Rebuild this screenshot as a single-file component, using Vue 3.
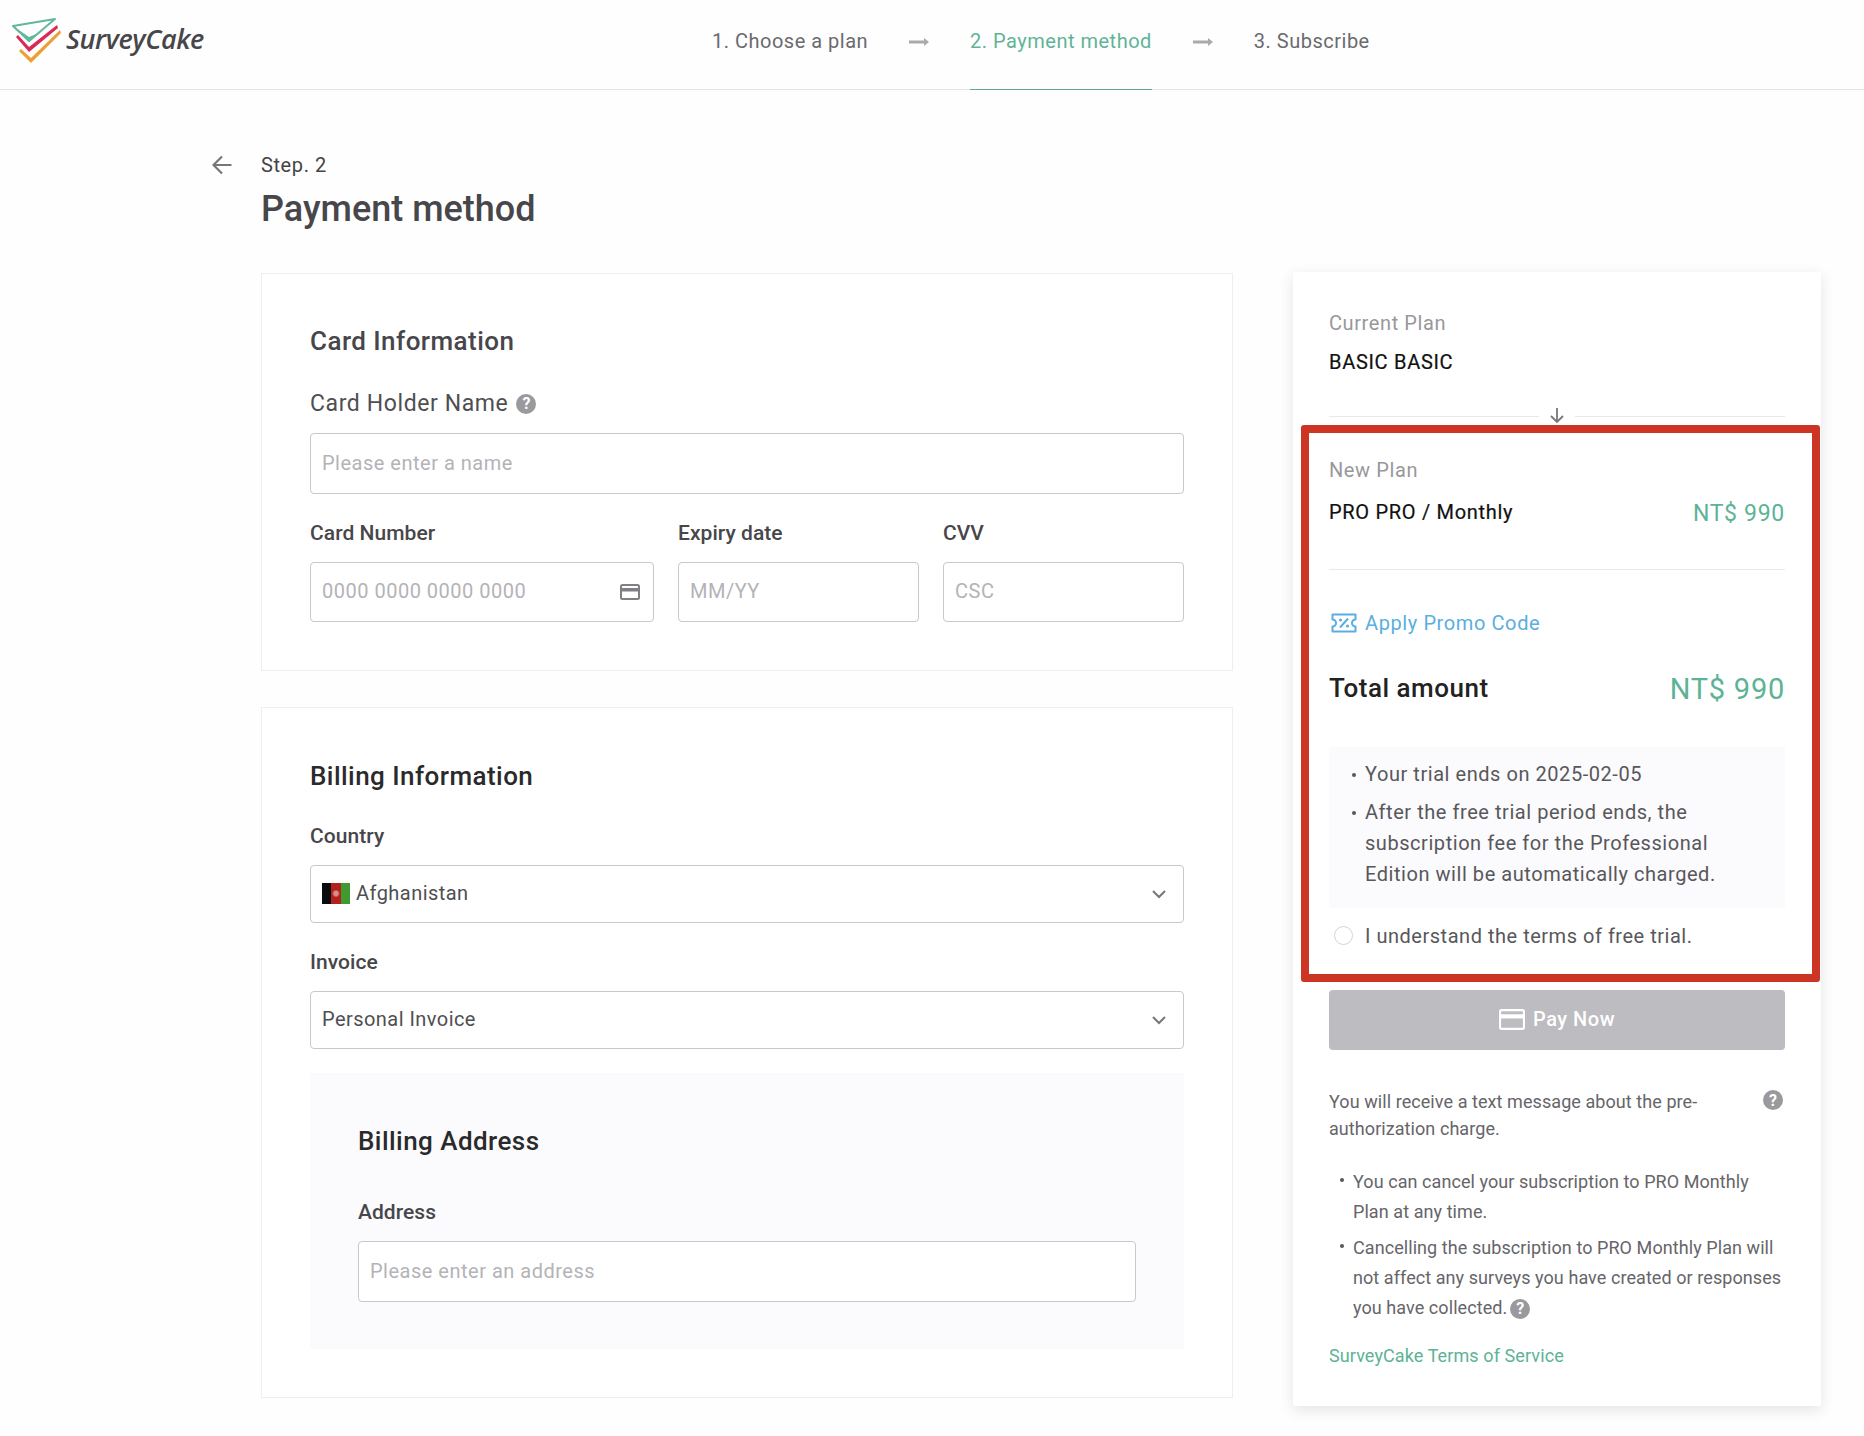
<template>
  <div class="page">
    <header class="topbar">
      <div class="brand">
        <svg class="brand-mark" viewBox="0 0 52 46" width="52" height="46">
          <polygon points="8,34 10,32 20,41 49,13 50,16 20,46" fill="#ee9f33" />
          <polygon points="5,20 7,18 18,30 46,8 47,11 18,35" fill="#d92b57" />
          <path d="M2 9 L44 2 L18 24 Z" fill="#fff" stroke="#62b89c" stroke-width="2" stroke-linejoin="round" />
          <path d="M2 9 L18 25 L30 15 L18 20 Z" fill="#62b89c" />
        </svg>
        <span class="brand-name">SurveyCake</span>
      </div>
      <nav class="steps">
        <template v-for="(step, index) of steps" :key="step.label">
          <svg v-if="index > 0" class="step-arrow" viewBox="0 0 20 10" width="20" height="10">
            <path d="M0 3.5h15V1l5 4l-5 4V6.5H0z" fill="#aaa9ad" />
          </svg>
          <div class="step" :class="{ active: step.active }">{{ step.label }}</div>
        </template>
      </nav>
    </header>

    <div class="head">
      <svg class="back" viewBox="0 0 20 20" width="20" height="20">
        <path d="M19.5 10H1.5M10 1.5L1.5 10L10 18.5" fill="none" stroke="#77767a" stroke-width="2.2" />
      </svg>
      <div>
        <div class="head-step">Step. 2</div>
        <h1 class="head-title">Payment method</h1>
      </div>
    </div>

    <main class="columns">
      <div class="forms">
        <section class="card">
          <h2 class="card-title muted-title">Card Information</h2>
          <div class="holder-label">Card Holder Name <span class="help">?</span></div>
          <input class="field tall" placeholder="Please enter a name" />
          <div class="card-row">
            <div class="col-number">
              <label class="label">Card Number</label>
              <div class="with-icon">
                <input class="field" placeholder="0000 0000 0000 0000" />
                <svg class="field-icon" viewBox="0 0 20 16" width="20" height="16">
                  <rect x="1" y="1" width="18" height="14" rx="1.5" fill="none" stroke="#807f83" stroke-width="2" />
                  <rect x="1" y="4" width="18" height="3.5" fill="#807f83" />
                </svg>
              </div>
            </div>
            <div class="col-short">
              <label class="label">Expiry date</label>
              <input class="field" placeholder="MM/YY" />
            </div>
            <div class="col-short">
              <label class="label">CVV</label>
              <input class="field" placeholder="CSC" />
            </div>
          </div>
        </section>

        <section class="card billing">
          <h2 class="card-title">Billing Information</h2>
          <label class="label country-label">Country</label>
          <div class="select">
            <span class="flag"><i class="black"></i><i class="red"></i><i class="green"></i></span>
            <span>Afghanistan</span>
            <svg class="chevron" viewBox="0 0 14 9" width="14" height="9">
              <path d="M1 1l6 6l6-6" fill="none" stroke="#77767a" stroke-width="2" />
            </svg>
          </div>
          <label class="label invoice-label">Invoice</label>
          <div class="select">
            <span>Personal Invoice</span>
            <svg class="chevron" viewBox="0 0 14 9" width="14" height="9">
              <path d="M1 1l6 6l6-6" fill="none" stroke="#77767a" stroke-width="2" />
            </svg>
          </div>
          <div class="address">
            <h2 class="card-title">Billing Address</h2>
            <label class="label address-label">Address</label>
            <input class="field tall" placeholder="Please enter an address" />
          </div>
        </section>
      </div>

      <aside class="summary">
        <div class="plan-caption">Current Plan</div>
        <div class="plan-name current">BASIC BASIC</div>
        <div class="rule first-rule">
          <span class="rule-arrow">
            <svg viewBox="0 0 14 16" width="14" height="16">
              <path d="M7 0v14M1 8l6 6l6-6" fill="none" stroke="#77767a" stroke-width="1.8" />
            </svg>
          </span>
        </div>

        <div class="plan-caption new-caption">New Plan</div>
        <div class="plan-row">
          <span class="plan-name">PRO PRO / Monthly</span>
          <span class="price">NT$ 990</span>
        </div>
        <div class="rule second-rule"></div>

        <div class="promo">
          <svg viewBox="0 0 26 20" width="26" height="20">
            <path d="M1.5 1.5h23v5a3.5 3.5 0 0 0 0 7v5h-23v-5a3.5 3.5 0 0 0 0-7z" fill="none" stroke="#5aaee0" stroke-width="2" stroke-linejoin="round" />
            <path d="M9 14.5L17 5.5" stroke="#5aaee0" stroke-width="2" />
            <circle cx="9.5" cy="7" r="1.6" fill="#5aaee0" />
            <circle cx="16.5" cy="13" r="1.6" fill="#5aaee0" />
          </svg>
          <span>Apply Promo Code</span>
        </div>

        <div class="total">
          <span>Total amount</span>
          <span class="total-price">NT$ 990</span>
        </div>

        <ul class="notes">
          <li>Your trial ends on 2025-02-05</li>
          <li>After the free trial period ends, the subscription fee for the Professional Edition will be automatically charged.</li>
        </ul>

        <div class="agree">
          <span class="radio"></span>
          <span>I understand the terms of free trial.</span>
        </div>

        <button class="pay">
          <svg viewBox="0 0 25 20" width="26" height="21">
            <rect x="1" y="1" width="23" height="18" rx="1.5" fill="none" stroke="#fff" stroke-width="2" />
            <rect x="1" y="5" width="23" height="4" fill="#fff" />
          </svg>
          <span>Pay Now</span>
        </button>

        <div class="sms">
          <p>You will receive a text message about the pre-authorization charge.</p>
          <span class="help">?</span>
        </div>

        <ul class="terms">
          <li>You can cancel your subscription to PRO Monthly Plan at any time.</li>
          <li>Cancelling the subscription to PRO Monthly Plan will not affect any surveys you have created or responses you have collected.<span class="help inline">?</span></li>
        </ul>

        <div class="terms-link">SurveyCake Terms of Service</div>

        <div class="highlight"></div>
      </aside>
    </main>
  </div>
</template>

<script setup>
const steps = [
  { label: "1. Choose a plan", active: false },
  { label: "2. Payment method", active: true },
  { label: "3. Subscribe", active: false },
];
</script>

<style scoped>
.page {
  width: 1864px;
  height: 1436px;
  overflow: hidden;
  background: #fefefe;
  color: #444;
  font-family: Roboto, "Liberation Sans", sans-serif;
  font-size: 20px;
  letter-spacing: 0.6px;
}

.topbar {
  display: grid;
  grid-template-columns: 712px auto;
  height: 90px;
  box-sizing: border-box;
  border-bottom: 1px solid #e4e3e6;
}

.brand {
  display: flex;
  align-items: flex-start;
  padding: 17px 0 0 11px;
}

.brand-name {
  margin: 4px 0 0 3px;
  font-family: "Open Sans", sans-serif;
  font-size: 27px;
  line-height: 36px;
  font-style: italic;
  font-weight: 600;
  letter-spacing: -0.4px;
  color: #47464a;
}

.steps {
  display: flex;
  align-items: flex-start;
  gap: 41px;
}

.step {
  height: 90px;
  box-sizing: border-box;
  line-height: 82px;
  letter-spacing: 0.5px;
  color: #6b6a6e;
  font-size: 20px;
}

.step.active {
  color: #62b398;
  border-bottom: 1px solid #62a796;
}

.step-arrow {
  margin-top: 37px;
}

.head {
  display: flex;
  padding: 60px 0 0 212px;
}

.back {
  width: 20px;
  margin: 5px 29px 0 0;
}

.head-step {
  line-height: 30px;
  font-size: 20px;
}

.head-title {
  margin: 6px 0 0;
  font-size: 36px;
  line-height: 46px;
  font-weight: 500;
  letter-spacing: 0;
  color: #47464a;
}

.columns {
  display: flex;
  align-items: flex-start;
  gap: 60px;
  margin-top: 40px;
  padding-left: 261px;
}

.forms {
  width: 972px;
  margin-top: 1px;
}

.card {
  box-sizing: border-box;
  padding: 49px 48px 48px;
  background: #fff;
  border: 1px solid #eeedef;
}

.billing {
  margin-top: 36px;
  padding-top: 50px;
}

.card-title {
  margin: 0;
  font-size: 26px;
  line-height: 36px;
  font-weight: 500;
  letter-spacing: 0.45px;
  color: #2a2a2c;
}

.muted-title {
  color: #47464a;
}

.holder-label {
  display: flex;
  align-items: center;
  gap: 8px;
  margin: 30px 0 14px;
  font-size: 23px;
  line-height: 30px;
  color: #4f4e52;
}

.label {
  display: block;
  font-size: 21px;
  line-height: 28px;
  font-weight: 500;
  letter-spacing: 0.05px;
  color: #47464a;
  margin-bottom: 15px;
}

.help {
  display: inline-flex;
  align-items: center;
  justify-content: center;
  flex: none;
  width: 20px;
  height: 20px;
  border-radius: 50%;
  background: #9a999d;
  color: #fff;
  font-size: 16px;
  font-weight: 700;
  letter-spacing: 0;
}

.help.inline {
  margin-left: 3px;
  vertical-align: 0;
}

.field {
  display: block;
  width: 100%;
  height: 60px;
  box-sizing: border-box;
  padding: 0 11px 2px;
  border: 1px solid #c9c8cb;
  border-radius: 4px;
  background: #fff;
  font-family: inherit;
  font-size: 20px;
  letter-spacing: 0.5px;
  outline: none;
}

.field.tall {
  height: 61px;
  padding-bottom: 1px;
}

.field::placeholder {
  color: #b4b3b7;
  opacity: 1;
}

.card-row {
  display: flex;
  gap: 24px;
  margin-top: 25px;
}

.col-number {
  width: 344px;
}

.col-short {
  width: 241px;
}

.with-icon {
  position: relative;
}

.field-icon {
  position: absolute;
  top: 22px;
  right: 14px;
}

.country-label {
  margin-top: 28px;
}

.invoice-label {
  margin-top: 25px;
}

.select {
  display: flex;
  align-items: center;
  height: 58px;
  box-sizing: border-box;
  padding: 0 17px 2px 11px;
  border: 1px solid #c9c8cb;
  border-radius: 4px;
  background: #fff;
  letter-spacing: 0.45px;
  color: #4f4e52;
}

.chevron {
  margin-left: auto;
  margin-top: 2px;
}

.flag {
  display: flex;
  width: 28px;
  height: 21px;
  margin-right: 6px;
}

.flag i {
  flex: 1;
}

.flag .black {
  background: #0b0b0b;
}

.flag .red {
  background: radial-gradient(circle, #d98f88 0 2px, #b3201f 4px);
}

.flag .green {
  background: #3f9a2f;
}

.address {
  height: 276px;
  box-sizing: border-box;
  margin-top: 24px;
  padding: 50px 48px 0;
  background: #fbfafc;
}

.address-label {
  margin-top: 39px;
}

.summary {
  position: relative;
  width: 528px;
  box-sizing: border-box;
  padding: 36px 36px 36px;
  background: #fff;
  border-radius: 2px;
  box-shadow: 0 4px 14px rgba(70, 65, 90, 0.14);
}

.plan-caption {
  line-height: 30px;
  color: #98979b;
}

.plan-name {
  line-height: 30px;
  font-weight: 400;
  letter-spacing: 0.7px;
  color: #111;
  -webkit-text-stroke: 0.2px #111;
}

.current {
  margin-top: 9px;
}

.rule {
  position: relative;
  height: 1px;
  background: #e9e8ea;
}

.first-rule {
  margin-top: 39px;
}

.rule-arrow {
  position: absolute;
  left: 210px;
  top: -16px;
  width: 36px;
  height: 32px;
  display: flex;
  justify-content: center;
  align-items: flex-start;
  padding-top: 8px;
  box-sizing: border-box;
  background: #fff;
  border-radius: 50%;
}

.new-caption {
  margin-top: 38px;
}

.plan-row {
  display: flex;
  justify-content: space-between;
  align-items: center;
  height: 32px;
  margin-top: 11px;
}

.price {
  font-size: 23px;
  color: #5cb395;
  letter-spacing: 0.7px;
  padding-top: 2px;
}

.second-rule {
  margin-top: 41px;
}

.promo {
  display: flex;
  align-items: center;
  gap: 8px;
  height: 30px;
  margin: 38px 0 0 2px;
  color: #5aaee0;
}

.total {
  display: flex;
  justify-content: space-between;
  align-items: center;
  height: 40px;
  margin-top: 30px;
  font-size: 26px;
  font-weight: 500;
  letter-spacing: 0.5px;
  color: #222;
}

.total-price {
  font-size: 29px;
  font-weight: 400;
  letter-spacing: 0.75px;
  padding-top: 2px;
  color: #5cb395;
}

.notes {
  margin: 39px 0 0;
  padding: 12px 24px 18px 36px;
  height: 161px;
  box-sizing: border-box;
  background: #fbfafc;
  list-style: none;
  line-height: 31px;
  letter-spacing: 0.55px;
  color: #58575b;
}

.notes li {
  position: relative;
}

.notes li + li {
  margin-top: 7px;
}

.notes li::before,
.terms li::before {
  content: "";
  position: absolute;
  left: -13px;
  top: 14px;
  width: 4px;
  height: 4px;
  border-radius: 50%;
  background: #58575b;
}

.agree {
  display: flex;
  align-items: center;
  height: 30px;
  margin-top: 13px;
  letter-spacing: 0.52px;
  color: #58575b;
}

.radio {
  width: 17px;
  height: 17px;
  margin: 0 12px 2px 5px;
  border: 1px solid #d5d4d7;
  border-radius: 50%;
  background: #fff;
}

.pay {
  display: flex;
  align-items: center;
  justify-content: center;
  gap: 8px;
  width: 100%;
  height: 60px;
  margin-top: 39px;
  padding-bottom: 3px;
  border: none;
  border-radius: 4px;
  background: #bdbcc0;
  color: #fff;
  font-family: inherit;
  font-size: 20px;
  font-weight: 500;
  letter-spacing: 0.5px;
}

.sms {
  display: flex;
  justify-content: space-between;
  align-items: flex-start;
  margin-top: 38px;
}

.sms p {
  width: 400px;
  margin: 0;
  font-size: 18px;
  line-height: 27px;
  letter-spacing: 0.07px;
  color: #666569;
}

.sms .help {
  margin: 2px 2px 0 0;
}

.terms {
  margin: 25px 0 0;
  padding: 0 0 0 24px;
  list-style: none;
  font-size: 18px;
  line-height: 30px;
  letter-spacing: 0.07px;
  color: #666569;
}

.terms li {
  position: relative;
}

.terms li + li {
  margin-top: 6px;
}

.terms li::before {
  left: -13px;
  top: 11px;
}

.terms-link {
  margin-top: 19px;
  font-size: 18px;
  line-height: 28px;
  letter-spacing: 0.1px;
  color: #5cb395;
}

.highlight {
  position: absolute;
  left: 8px;
  top: 153px;
  width: 519px;
  height: 557px;
  box-sizing: border-box;
  border: 8px solid #cc3524;
  border-radius: 3px;
  pointer-events: none;
}
</style>

<style>
body {
  background: #fefefe;
}
</style>
